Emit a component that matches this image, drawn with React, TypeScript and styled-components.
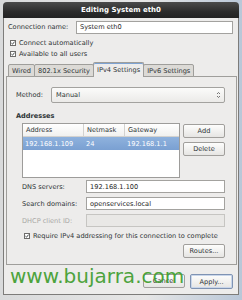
import * as React from 'react';
import styled, { createGlobalStyle } from 'styled-components';

const Global = createGlobalStyle`
  html, body { margin: 0; padding: 0; }
  body {
    width: 242px;
    height: 300px;
    overflow: hidden;
    background: linear-gradient(90deg, #d9dadb 0%, #e6e6e6 60%, #b9c7d8 100%);
    font-family: "DejaVu Sans", Verdana, sans-serif;
    font-size: 6.6px;
    color: #2e3436;
  }
`;

const Window = styled.div`
  width: 236px;
  margin: 2px 0 0 3px;
  display: flex;
  flex-direction: column;
`;

const TitleBar = styled.div`
  height: 16px;
  border-radius: 4px 4px 0 0;
  background: linear-gradient(#4b4b4b, #2c2c2c 60%, #222);
  color: #fff;
  font-weight: bold;
  font-size: 7px;
  display: flex;
  align-items: center;
  justify-content: center;
`;

const Body = styled.div`
  position: relative;
  background: #edeceb;
  border: 1px solid #7d7c7a;
  border-top: none;
  padding: 3px 5px 5px 4px;
  display: flex;
  flex-direction: column;
`;

const NameRow = styled.div`
  display: flex;
  align-items: center;
  height: 12px;
`;

const NameLabel = styled.span`
  width: 68px;
`;

const TextInput = styled.div<{ $disabled?: boolean }>`
  flex: 1;
  height: 13px;
  box-sizing: border-box;
  border: 1px solid ${p => (p.$disabled ? '#c6c5c2' : '#a3a29f')};
  background: ${p => (p.$disabled ? '#e9e8e6' : '#fff')};
  display: flex;
  align-items: center;
  padding-left: 3px;
  color: #1e1e1e;
`;

const CheckRow = styled.label<{ $indent?: number }>`
  display: flex;
  align-items: center;
  gap: 3px;
  height: 11px;
  padding-left: ${p => p.$indent ?? 2}px;
`;

const Checks = styled.div`
  margin-top: 4px;
  display: flex;
  flex-direction: column;
`;

const Notebook = styled.div`
  margin: 3px -4px 0 -2px;
  display: flex;
  flex-direction: column;
`;

const TabBar = styled.div`
  display: flex;
  align-items: flex-end;
  height: 15px;
  padding-left: 3px;
  margin-bottom: -1px;
`;

const Tab = styled.div<{ $active?: boolean }>`
  box-sizing: border-box;
  height: ${p => (p.$active ? 15 : 13)}px;
  padding: 0 3px;
  display: flex;
  align-items: center;
  border: 1px solid #9f9e9b;
  border-bottom: ${p => (p.$active ? 'none' : '1px solid #9f9e9b')};
  margin-left: -1px;
  background: ${p => (p.$active ? '#edeceb' : '#dcdad6')};
  border-radius: 2px 2px 0 0;
  position: relative;
  z-index: ${p => (p.$active ? 1 : 0)};
  box-shadow: ${p => (p.$active ? 'inset 0 1px 0 #7ea3d2' : 'none')};
`;

const Panel = styled.div`
  border: 1px solid #9f9e9b;
  background: #edeceb;
  padding: 10px 11px 6px 9px;
  display: flex;
  flex-direction: column;
`;

const MethodRow = styled.div`
  display: flex;
  align-items: center;
  height: 16px;
`;

const MethodLabel = styled.span`
  width: 35px;
`;

const Combo = styled.div`
  flex: 1;
  height: 16px;
  box-sizing: border-box;
  border: 1px solid #a3a29f;
  border-radius: 2px;
  background: linear-gradient(#fbfbfa, #ebeae8);
  display: flex;
  align-items: center;
  justify-content: space-between;
  padding: 0 3px 0 4px;
`;

const SectionTitle = styled.div`
  margin-top: 8px;
  height: 10px;
  font-weight: bold;
  display: flex;
  align-items: center;
`;

const AddressArea = styled.div`
  display: flex;
  gap: 3px;
  margin-top: 2px;
  padding-left: 6px;
`;

const Table = styled.div`
  width: 158px;
  height: 55px;
  box-sizing: border-box;
  border: 1px solid #9d9c9a;
  background: #fff;
  display: flex;
  flex-direction: column;
`;

const TableRow = styled.div<{ $header?: boolean; $selected?: boolean }>`
  display: grid;
  grid-template-columns: 61px 41px 1fr;
  height: 13px;
  align-items: stretch;
  background: ${p =>
    p.$selected
      ? 'linear-gradient(#8fb2dd, #7aa0d2)'
      : p.$header
      ? 'linear-gradient(#fff, #f1f1ef)'
      : 'transparent'};
  color: ${p => (p.$selected ? '#fff' : '#2e3436')};
  border-bottom: ${p => (p.$header ? '1px solid #d3d2cf' : 'none')};
  box-sizing: border-box;
`;

const Cell = styled.div<{ $header?: boolean; $last?: boolean }>`
  display: flex;
  align-items: center;
  padding-left: ${p => (p.$header ? 3 : 2)}px;
  border-right: ${p => (p.$header && !p.$last ? '1px solid #d3d2cf' : 'none')};
`;

const ButtonColumn = styled.div`
  display: flex;
  flex-direction: column;
  gap: 4px;
  padding-top: 1px;
`;

const Button = styled.div<{ $focus?: boolean; $w?: number }>`
  width: ${p => p.$w ?? 42}px;
  height: ${p => (p.$focus ? 15 : 14)}px;
  box-sizing: border-box;
  border: 1px solid ${p => (p.$focus ? '#7f93b3' : '#a19f9c')};
  border-radius: 2px;
  background: linear-gradient(#fdfdfc, #e6e5e3);
  box-shadow: ${p => (p.$focus ? 'inset 0 0 0 1px #c9d6ea' : 'none')};
  display: flex;
  align-items: center;
  justify-content: center;
  color: #2e3436;
`;

const Form = styled.div`
  display: grid;
  grid-template-columns: 64px 1fr;
  row-gap: 4px;
  margin-top: 2px;
  padding-left: 6px;
  align-items: center;
`;

const FormLabel = styled.span<{ $disabled?: boolean }>`
  color: ${p => (p.$disabled ? '#a9a8a5' : '#2e3436')};
`;

const RequireRow = styled.div`
  margin-top: 3px;
  padding-left: 6px;
`;

const RightRow = styled.div<{ $top: number }>`
  display: flex;
  justify-content: flex-end;
  gap: 5px;
  margin-top: ${p => p.$top}px;
`;

const Watermark = styled.div`
  position: absolute;
  left: 6px;
  bottom: 8px;
  font-family: "DejaVu Sans", Verdana, sans-serif;
  font-size: 20px;
  line-height: 20px;
  color: #45a034;
  opacity: 0.95;
  pointer-events: none;
  white-space: nowrap;
`;

const CheckBox = () => (
  <svg width="6" height="6" viewBox="0 0 6 6">
    <rect x="0.5" y="0.5" width="5" height="5" fill="#fff" stroke="#6d6c6a" />
    <path d="M1.4 3.1 L2.5 4.2 L4.6 1.6" fill="none" stroke="#2e3436" strokeWidth="0.9" />
  </svg>
);

const UpDown = () => (
  <svg width="5" height="8" viewBox="0 0 5 8">
    <path d="M1 3 L2.5 1.5 L4 3" fill="none" stroke="#555" strokeWidth="0.8" />
    <path d="M1 5 L2.5 6.5 L4 5" fill="none" stroke="#555" strokeWidth="0.8" />
  </svg>
);

export default function App() {
  const tabs = ['Wired', '802.1x Security', 'IPv4 Settings', 'IPv6 Settings'];
  return (
    <>
      <Global />
      <Window>
        <TitleBar>Editing System eth0</TitleBar>
        <Body>
          <NameRow>
            <NameLabel>Connection name:</NameLabel>
            <TextInput>System eth0</TextInput>
          </NameRow>
          <Checks>
            <CheckRow>
              <CheckBox />
              Connect automatically
            </CheckRow>
            <CheckRow>
              <CheckBox />
              Available to all users
            </CheckRow>
          </Checks>

          <Notebook>
            <TabBar>
              {tabs.map((t, i) => (
                <Tab key={t} $active={i === 2}>
                  {t}
                </Tab>
              ))}
            </TabBar>
            <Panel>
              <MethodRow>
                <MethodLabel>Method:</MethodLabel>
                <Combo>
                  Manual
                  <UpDown />
                </Combo>
              </MethodRow>

              <SectionTitle>Addresses</SectionTitle>
              <AddressArea>
                <Table>
                  <TableRow $header>
                    <Cell $header>Address</Cell>
                    <Cell $header>Netmask</Cell>
                    <Cell $header $last>Gateway</Cell>
                  </TableRow>
                  <TableRow $selected>
                    <Cell>192.168.1.109</Cell>
                    <Cell>24</Cell>
                    <Cell>192.168.1.1</Cell>
                  </TableRow>
                </Table>
                <ButtonColumn>
                  <Button>Add</Button>
                  <Button>Delete</Button>
                </ButtonColumn>
              </AddressArea>

              <Form>
                <FormLabel>DNS servers:</FormLabel>
                <TextInput>192.168.1.100</TextInput>
                <FormLabel>Search domains:</FormLabel>
                <TextInput>openservices.local</TextInput>
                <FormLabel $disabled>DHCP client ID:</FormLabel>
                <TextInput $disabled />
              </Form>

              <RequireRow>
                <CheckRow>
                  <CheckBox />
                  Require IPv4 addressing for this connection to complete
                </CheckRow>
              </RequireRow>

              <RightRow $top={3}>
                <Button>Routes...</Button>
              </RightRow>
            </Panel>
          </Notebook>

          <RightRow $top={9}>
            <Button>Cancel</Button>
            <Button $focus $w={43}>Apply...</Button>
          </RightRow>
          <Watermark>www.bujarra.com</Watermark>
        </Body>
      </Window>
    </>
  );
}
